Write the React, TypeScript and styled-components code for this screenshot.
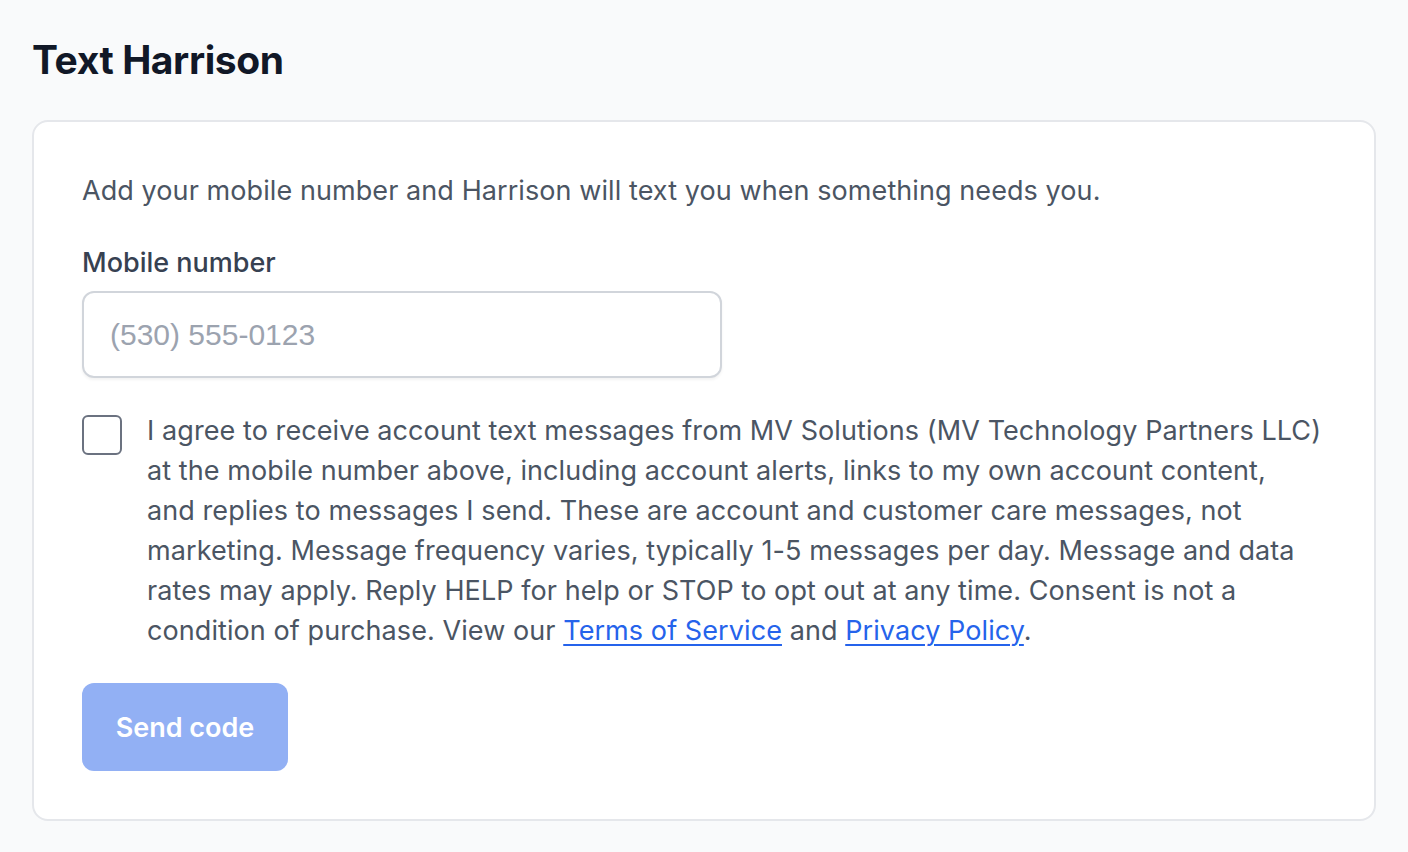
import React from "react";
import styled, { createGlobalStyle } from "styled-components";

const GlobalStyle = createGlobalStyle`
  html, body { margin: 0; padding: 0; background: #f9fafb; }
  body { font-family: Inter, "Noto Sans", sans-serif; -webkit-font-smoothing: antialiased; }
  * { box-sizing: border-box; }
`;

const Page = styled.main`
  padding: 36px 32px 32px 32px;
  display: flex;
  flex-direction: column;
  gap: 36px;
`;

const Title = styled.h1`
  margin: 0;
  font-size: 39px;
  line-height: 48px;
  font-weight: 700;
  letter-spacing: -0.4px;
  color: #111827;
`;

const Card = styled.section`
  background: #ffffff;
  border: 2px solid #e5e7eb;
  border-radius: 16px;
  padding: 49px 48px 48px 48px;
  display: flex;
  flex-direction: column;
`;

const Intro = styled.p`
  margin: 0 0 32px 0;
  font-size: 27px;
  line-height: 40px;
  letter-spacing: 0.08px;
  color: #4b5563;
`;

const Label = styled.label`
  display: block;
  font-size: 27px;
  line-height: 40px;
  font-weight: 500;
  color: #374151;
  margin-bottom: 8px;
`;

const Input = styled.input`
  width: 640px;
  height: 87px;
  border: 2px solid #d1d5db;
  border-radius: 12px;
  padding: 0 26px;
  font-family: "Liberation Sans", Arial, sans-serif;
  font-size: 30px;
  color: #111827;
  background: #fff;
  box-shadow: 0 2px 3px rgba(0, 0, 0, 0.05);
  outline: none;
  &::placeholder { color: #9ca3af; }
`;

const ConsentRow = styled.div`
  display: flex;
  align-items: flex-start;
  gap: 25px;
  margin-top: 33px;
`;

const Box = styled.input`
  appearance: none;
  flex: none;
  width: 40px;
  height: 40px;
  margin: 4px 0 0 0;
  border: 2px solid #6b7280;
  border-radius: 6px;
  background: #fff;
`;

const ConsentText = styled.p`
  margin: 0;
  font-size: 27px;
  line-height: 40px;
  letter-spacing: 0.08px;
  color: #4b5563;
`;

const Link = styled.a`
  color: #2563eb;
  text-decoration: underline;
  text-underline-offset: 4px;
  text-decoration-thickness: 2px;
`;

const Button = styled.button`
  margin-top: 32px;
  align-self: flex-start;
  width: 206px;
  height: 88px;
  border: none;
  border-radius: 12px;
  background: #92b0f4;
  color: #ffffff;
  font-family: Inter, sans-serif;
  font-size: 27px;
  font-weight: 600;
`;

export default function App() {
  return (
    <>
      <GlobalStyle />
      <Page>
        <Title>Text Harrison</Title>
        <Card>
          <Intro>
            Add your mobile number and Harrison will text you when something needs you.
          </Intro>
          <Label htmlFor="phone">Mobile number</Label>
          <Input id="phone" type="tel" placeholder="(530) 555-0123" />
          <ConsentRow>
            <Box type="checkbox" aria-label="consent" />
            <ConsentText>
              I agree to receive account text messages from MV Solutions (MV Technology Partners LLC)
              <br />
              at the mobile number above, including account alerts, links to my own account content,
              <br />
              and replies to messages I send. These are account and customer care messages, not
              <br />
              marketing. Message frequency varies, typically 1-5 messages per day. Message and data
              <br />
              rates may apply. Reply HELP for help or STOP to opt out at any time. Consent is not a
              <br />
              condition of purchase. View our <Link href="#">Terms of Service</Link> and{" "}
              <Link href="#">Privacy Policy</Link>.
            </ConsentText>
          </ConsentRow>
          <Button disabled>Send code</Button>
        </Card>
      </Page>
    </>
  );
}
